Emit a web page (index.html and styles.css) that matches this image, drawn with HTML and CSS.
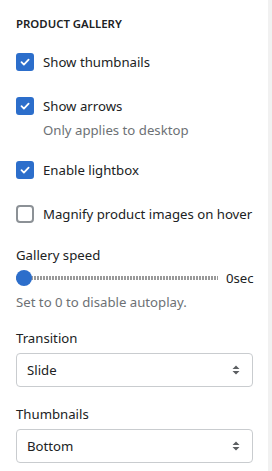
FILE: index.html
```html
<!DOCTYPE html>
<html lang="en">
<head>
  <meta charset="UTF-8">
  <meta name="viewport" content="width=device-width, initial-scale=1.0">
  <title>Product gallery</title>
  <link rel="stylesheet" href="styles.css">
</head>
<body>
  <div class="panel">
    <h3 class="section-title">Product gallery</h3>

    <!-- Checkboxes -->
    <div class="check-row row-1">
      <span class="box checked">
        <svg width="12" height="12" viewBox="0 0 12 12"><path d="M2.5 6.2l2.4 2.4 4.7-4.9" fill="none" stroke="#fff" stroke-width="1.8" stroke-linecap="round" stroke-linejoin="round"/></svg>
      </span>
      <span class="check-label">Show thumbnails</span>
    </div>

    <div class="check-row row-2">
      <span class="box checked">
        <svg width="12" height="12" viewBox="0 0 12 12"><path d="M2.5 6.2l2.4 2.4 4.7-4.9" fill="none" stroke="#fff" stroke-width="1.8" stroke-linecap="round" stroke-linejoin="round"/></svg>
      </span>
      <span class="check-label">Show arrows</span>
    </div>
    <p class="help indent">Only applies to desktop</p>

    <div class="check-row row-3">
      <span class="box checked">
        <svg width="12" height="12" viewBox="0 0 12 12"><path d="M2.5 6.2l2.4 2.4 4.7-4.9" fill="none" stroke="#fff" stroke-width="1.8" stroke-linecap="round" stroke-linejoin="round"/></svg>
      </span>
      <span class="check-label">Enable lightbox</span>
    </div>

    <div class="check-row row-4">
      <span class="box"></span>
      <span class="check-label">Magnify product images on hover</span>
    </div>

    <!-- Slider -->
    <p class="field-label speed-label">Gallery speed</p>
    <div class="range">
      <div class="range-track">
        <span class="range-thumb"></span>
      </div>
      <span class="range-value">0sec</span>
    </div>
    <p class="help range-help">Set to 0 to disable autoplay.</p>

    <!-- Selects -->
    <div class="field">
      <p class="field-label">Transition</p>
      <div class="select">
        <span>Slide</span>
        <svg width="8" height="12" viewBox="0 0 8 12"><path d="M4 1.5L7.5 5H0.5z M4 10.5L0.5 7h7z" fill="#5c5f62"/></svg>
      </div>
    </div>

    <div class="field">
      <p class="field-label">Thumbnails</p>
      <div class="select">
        <span>Bottom</span>
        <svg width="8" height="12" viewBox="0 0 8 12"><path d="M4 1.5L7.5 5H0.5z M4 10.5L0.5 7h7z" fill="#5c5f62"/></svg>
      </div>
    </div>
  </div>
</body>
</html>
```

FILE: styles.css
```css
* {
  margin: 0;
  padding: 0;
  box-sizing: border-box;
}
body {
  font-family: "Noto Sans", "Open Sans", sans-serif;
  font-size: 13.2px;
  line-height: 20px;
  color: #202223;
  background: #fff;
  overflow: hidden;
}

.panel {
  height: 471px;
  padding: 16px 15px 0 16px;
  border-right: 4px solid #f1f1f1;
}

.section-title {
  font-size: 11.4px;
  font-weight: 600;
  line-height: 16px;
  text-transform: uppercase;
  color: #202223;
}

/* Checkboxes */
.check-row {
  display: flex;
  align-items: center;
  gap: 9px;
  height: 20px;
}
.row-1 { margin-top: 20px; }
.row-2 { margin-top: 24px; }
.row-3 { margin-top: 20px; }
.row-4 { margin-top: 24px; }

.box {
  width: 18px;
  height: 18px;
  border: 2px solid #8c9196;
  border-radius: 4px;
  display: flex;
  align-items: center;
  justify-content: center;
  flex-shrink: 0;
}
.box.checked {
  background: #2c6ecb;
  border-color: #2c6ecb;
  border-radius: 3px;
}

.help {
  color: #6d7175;
  margin-top: 4px;
}
.help.indent {
  padding-left: 27px;
}

/* Slider */
.field-label {
  color: #202223;
}
.speed-label {
  margin-top: 21px;
}
.range {
  display: flex;
  align-items: center;
  gap: 8px;
  height: 20px;
  margin-top: 3px;
}
.range-track {
  position: relative;
  flex: 1;
  height: 4px;
  background: repeating-linear-gradient(90deg, #9a9a9a 0 2px, transparent 2px 3px);
}
.range-thumb {
  position: absolute;
  left: 0;
  top: -6px;
  width: 16px;
  height: 16px;
  border-radius: 50%;
  background: #2c6ecb;
}
.range-value {
  width: 27px;
  color: #202223;
}

/* Selects */
.field {
  margin-top: 16px;
}
.field + .field {
  margin-top: 17px;
}
.select {
  display: flex;
  align-items: center;
  justify-content: space-between;
  height: 34px;
  margin-top: 5px;
  padding: 0 12px 0 10px;
  border: 1px solid #c9cccf;
  border-radius: 4px;
  background: #fff;
}
```
